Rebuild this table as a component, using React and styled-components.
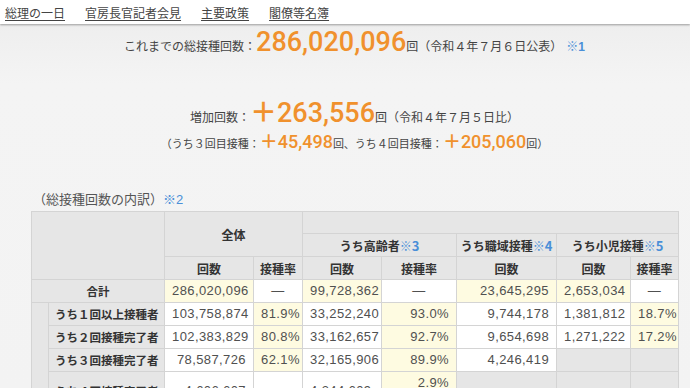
import styled, { createGlobalStyle } from "styled-components";

const GlobalStyle = createGlobalStyle`
  html, body {
    margin: 0;
    padding: 0;
    background: #f2f2f2;
    font-family: "Liberation Sans", "Noto Sans CJK JP", sans-serif;
    color: #333;
  }
`;

const Nav = styled.nav`
  height: 24px;
  background: #fff;
  display: flex;
  align-items: center;
  gap: 20px;
  padding-left: 5px;
  box-shadow: 0 1px 2px rgba(0, 0, 0, 0.35);
  position: relative;
  z-index: 1;
`;

const NavLink = styled.a`
  font-size: 12px;
  color: #444;
  text-decoration: underline;
  text-underline-offset: 2px;
  font-family: "Noto Sans CJK JP", sans-serif;
`;

const Main = styled.main`
  padding: 3px 12px 0 31px;
  height: 364px;
  overflow: hidden;
  background: linear-gradient(#eeeeee, #f4f4f4 60px, #f3f3f3);
`;

const Line = styled.div`
  text-align: center;
  font-size: ${(p) => p.$size || 12}px;
  line-height: ${(p) => p.$lh}px;
  margin-top: ${(p) => p.$mt || 0}px;
  color: #444;
  white-space: nowrap;
`;

const Big = styled.span`
  font-family: Roboto, "Liberation Sans", sans-serif;
  font-size: ${(p) => p.$size}px;
  font-weight: 500;
  color: #f0912d;
`;

const Plus = styled.span`
  font-family: "Noto Sans CJK JP", sans-serif;
  font-weight: bold;
`;

const Note = styled.span`
  color: #4a8fd8;
  font-size: ${(p) => p.$size || 12}px;
  font-weight: ${(p) => (p.$bold ? "bold" : "normal")};
  margin-left: ${(p) => p.$ml || 0}px;
`;

const Caption = styled.div`
  font-size: 13px;
  line-height: 18px;
  margin: 37px 0 2px 2px;
  color: #555;
`;

const Table = styled.table`
  border-collapse: collapse;
  table-layout: fixed;
  width: 647px;
  font-size: 13px;
`;

const tones = { gray: "#e6e6e6", yellow: "#fefbe1", white: "#fff" };

const Head = styled.th`
  background: #e6e6e6;
  border: 1px solid #d4d4d4;
  font-size: 12px;
  font-weight: bold;
  color: #333;
  height: ${(p) => p.$h || 22}px;
  padding: 0;
  text-align: center;
  white-space: nowrap;
  font-family: "Noto Sans CJK JP", sans-serif;
`;

const Label = styled(Head)`
  font-size: 11.5px;
  text-align: ${(p) => (p.$left ? "left" : "center")};
  padding-left: ${(p) => (p.$left ? 6 : 0)}px;
`;

const Cell = styled.td`
  background: ${(p) => tones[p.$tone || "white"]};
  border: 1px solid #d4d4d4;
  color: #505050;
  text-align: ${(p) => p.$align || "right"};
  padding: ${(p) => (p.$va === "top" ? "2px 7px 0" : "0 7px")};
  height: 22px;
  letter-spacing: 0.4px;
  white-space: nowrap;
  vertical-align: ${(p) => p.$va || "middle"};
  line-height: 18px;
`;

const rows = [
  ["うち１回以上接種者", "103,758,874", "81.9%", "33,252,240", "93.0%", "9,744,178", "1,381,812", "18.7%"],
  ["うち２回接種完了者", "102,383,829", "80.8%", "33,162,657", "92.7%", "9,654,698", "1,271,222", "17.2%"],
];

const App = () => (
  <>
    <GlobalStyle />
    <Nav>
      <NavLink>総理の一日</NavLink>
      <NavLink>官房長官記者会見</NavLink>
      <NavLink>主要政策</NavLink>
      <NavLink>閣僚等名簿</NavLink>
    </Nav>
    <Main>
      <Line $lh={30}>
        これまでの総接種回数：<Big $size={27}>286,020,096</Big>回（令和４年７月６日公表）
        <Note $ml={4}>※</Note><Note $bold>1</Note>
      </Line>
      <Line $lh={24} $mt={37}>
        増加回数：<Big $size={27}><Plus>＋</Plus>263,556</Big>回（令和４年７月５日比）
      </Line>
      <Line $lh={20} $size={11}>
        （うち３回目接種：<Big $size={18}><Plus>＋</Plus>45,498</Big>回、うち４回目接種：<Big $size={18}><Plus>＋</Plus>205,060</Big>回）
      </Line>
      <Caption>
        （総接種回数の内訳）<Note $size={13}>※2</Note>
      </Caption>
      <Table>
        <colgroup>
          <col style={{ width: 17 }} />
          <col style={{ width: 116 }} />
          <col style={{ width: 89 }} />
          <col style={{ width: 49 }} />
          <col style={{ width: 79 }} />
          <col style={{ width: 75 }} />
          <col style={{ width: 100 }} />
          <col style={{ width: 74 }} />
          <col style={{ width: 48 }} />
        </colgroup>
        <thead>
          <tr>
            <Head colSpan={2} rowSpan={3} />
            <Head colSpan={2} rowSpan={2}>全体</Head>
            <Head colSpan={5} $h={21} />
          </tr>
          <tr>
            <Head colSpan={2}>うち高齢者<Note $size={12}>※</Note><Note $bold $size={13}>3</Note></Head>
            <Head>うち職域接種<Note $size={12}>※</Note><Note $bold $size={13}>4</Note></Head>
            <Head colSpan={2}>うち小児接種<Note $size={12}>※</Note><Note $bold $size={13}>5</Note></Head>
          </tr>
          <tr>
            <Head>回数</Head>
            <Head>接種率</Head>
            <Head>回数</Head>
            <Head>接種率</Head>
            <Head>回数</Head>
            <Head>回数</Head>
            <Head>接種率</Head>
          </tr>
        </thead>
        <tbody>
          <tr>
            <Label colSpan={2}>合計</Label>
            <Cell $tone="yellow">286,020,096</Cell>
            <Cell $align="center">—</Cell>
            <Cell $tone="yellow" $align="left">99,728,362</Cell>
            <Cell $align="center">—</Cell>
            <Cell $tone="yellow">23,645,295</Cell>
            <Cell $tone="yellow">2,653,034</Cell>
            <Cell $align="center">—</Cell>
          </tr>
          {rows.map(([label, a, ar, b, br, c, d, dr], i) => (
            <tr key={label}>
              {i === 0 && <Head rowSpan={4} />}
              <Label $left>{label}</Label>
              <Cell>{a}</Cell>
              <Cell $tone="yellow">{ar}</Cell>
              <Cell $align="left">{b}</Cell>
              <Cell $tone="yellow">{br}</Cell>
              <Cell>{c}</Cell>
              <Cell>{d}</Cell>
              <Cell $tone="yellow">{dr}</Cell>
            </tr>
          ))}
          <tr>
            <Label $left>うち３回接種完了者</Label>
            <Cell>78,587,726</Cell>
            <Cell $tone="yellow">62.1%</Cell>
            <Cell $align="left">32,165,906</Cell>
            <Cell $tone="yellow">89.9%</Cell>
            <Cell>4,246,419</Cell>
            <Cell $tone="gray" />
            <Cell $tone="gray" />
          </tr>
          <tr>
            <Label $left>うち４回接種完了者</Label>
            <Cell>4,606,607</Cell>
            <Cell />
            <Cell $align="left">4,344,609</Cell>
            <Cell $tone="yellow" $va="top">
              2.9%
              <br />
              <br />
            </Cell>
            <Cell $tone="gray" />
            <Cell $tone="gray" />
            <Cell $tone="gray" />
          </tr>
        </tbody>
      </Table>
    </Main>
  </>
);

export default App;
